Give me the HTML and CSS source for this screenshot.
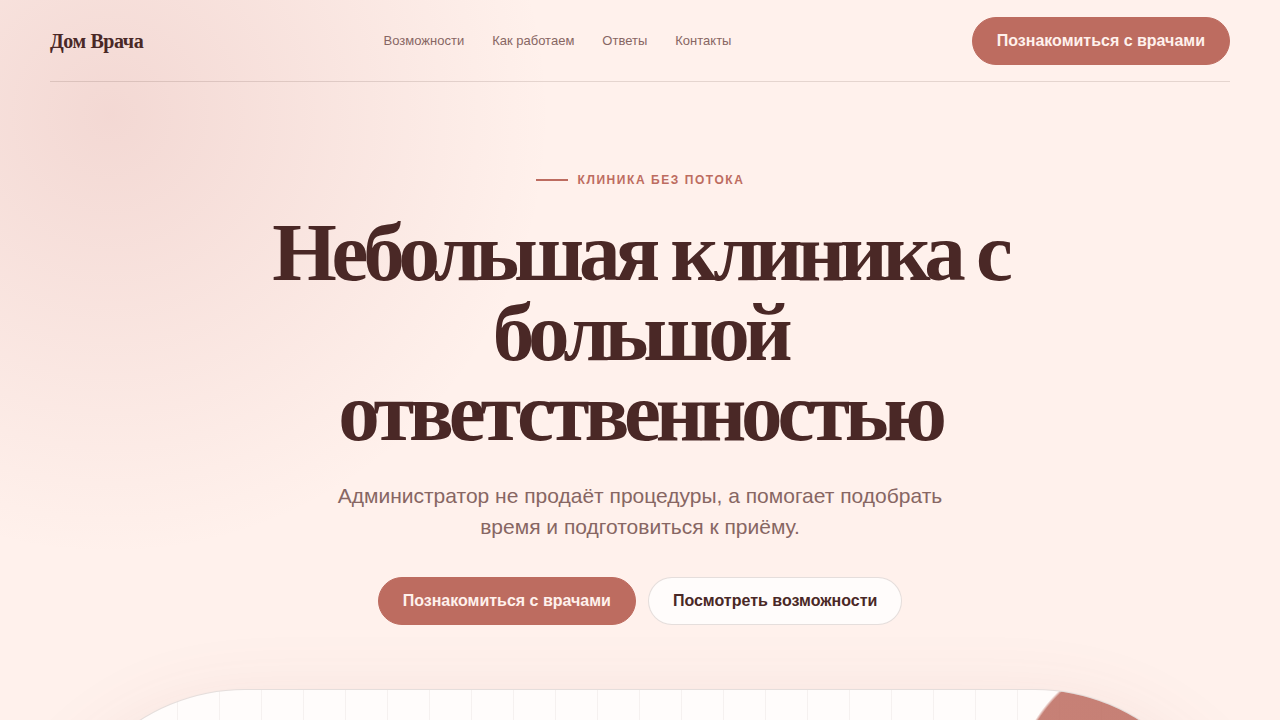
FILE: index.html
```html
<!DOCTYPE html>
<html lang="ru">
<head>
    <meta charset="UTF-8">
    <meta name="viewport" content="width=device-width, initial-scale=1.0">
    <title>Дом Врача</title>
    <link rel="stylesheet" href="styles.css">
</head>
<body>
    <div class="page">
        <header class="header">
            <a class="logo" href="#">Дом Врача</a>
            <nav class="nav">
                <a href="#features">Возможности</a>
                <a href="#process">Как работаем</a>
                <a href="#faq">Ответы</a>
                <a href="#contacts">Контакты</a>
            </nav>
            <button class="btn btn-primary" type="button">Познакомиться с врачами</button>
        </header>

        <main class="hero">
            <p class="eyebrow">Клиника без потока</p>
            <h1>Небольшая клиника с большой ответственностью</h1>
            <p class="lead">Администратор не продаёт процедуры, а помогает подобрать время и подготовиться к приёму.</p>
            <div class="actions">
                <button class="btn btn-primary" type="button">Познакомиться с врачами</button>
                <button class="btn btn-secondary" type="button">Посмотреть возможности</button>
            </div>
            <div class="visual"></div>
        </main>
    </div>
</body>
</html>
```
FILE: styles.css
```css
:root {
    --bg: #fff1ec;
    --surface: #fffcfb;
    --ink: #4a2826;
    --muted: #876663;
    --accent: #bd6c60;
    --line: rgba(74, 40, 38, 0.14);
}

* {
    box-sizing: border-box;
}

body {
    margin: 0;
    min-height: 100vh;
    overflow-x: hidden;
    font-family: "Liberation Sans", Arial, sans-serif;
    color: var(--ink);
    background: radial-gradient(circle at 110px 115px, rgba(189, 104, 100, 0.18), transparent 440px), var(--bg);
}

a {
    color: inherit;
    text-decoration: none;
}

.page {
    max-width: 1180px;
    width: calc(100% - 40px);
    margin: 0 auto;
}

/* Шапка */
.header {
    display: flex;
    justify-content: space-between;
    align-items: center;
    padding: 17px 0 16px;
    border-bottom: 1px solid var(--line);
}

.logo {
    font-family: "Liberation Serif", "Times New Roman", serif;
    font-size: 20px;
    font-weight: bold;
    letter-spacing: -0.02em;
}

.nav {
    display: flex;
    gap: 28px;
    font-size: 13px;
    line-height: 16px;
    color: var(--muted);
}

/* Кнопки */
.btn {
    min-height: 48px;
    padding: 0 24px;
    border: 1px solid transparent;
    border-radius: 999px;
    font-family: inherit;
    font-size: 16px;
    font-weight: bold;
    cursor: pointer;
}

.btn-primary {
    background: var(--accent);
    border-color: var(--accent);
    color: var(--bg);
}

.btn-secondary {
    background: var(--surface);
    border-color: var(--line);
    color: var(--ink);
}

/* Первый экран */
.hero {
    display: flex;
    flex-direction: column;
    align-items: center;
    padding: 90px 0 80px;
    text-align: center;
}

.eyebrow {
    display: flex;
    align-items: center;
    gap: 10px;
    margin: 0;
    font-size: 12px;
    line-height: 16px;
    font-weight: bold;
    letter-spacing: 0.13em;
    text-transform: uppercase;
    color: var(--accent);
}

.eyebrow::before {
    content: "";
    width: 32px;
    height: 2px;
    background: var(--accent);
}

h1 {
    max-width: 820px;
    margin: 24px 0 28px;
    font-family: "Liberation Serif", "Times New Roman", serif;
    font-size: 83px;
    line-height: 80px;
    letter-spacing: -0.062em;
}

.lead {
    max-width: 640px;
    margin: 0;
    font-size: 21px;
    line-height: 31px;
    color: var(--muted);
}

.actions {
    display: flex;
    flex-wrap: wrap;
    justify-content: center;
    gap: 12px;
    margin: 35px 0 64px;
}

.visual {
    align-self: stretch;
    min-height: 390px;
    border: 1px solid var(--line);
    border-radius: 999px;
    background:
        radial-gradient(circle at 1112px 110px, rgba(189, 108, 96, 0.86) 148px, transparent 151px) padding-box,
        linear-gradient(90deg, rgba(74, 40, 38, 0.05) 1px, transparent 1px) 0 0 / 42px 42px padding-box,
        var(--surface) border-box;
    box-shadow: 0 30px 90px rgba(150, 70, 70, 0.14);
}
```
